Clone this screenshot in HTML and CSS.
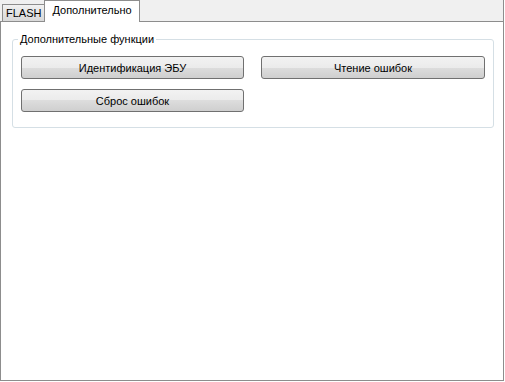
FILE: index.html
```html
<!DOCTYPE html>
<html>
  <head>
    <title>Дополнительно</title>
    <meta charset="utf-8">
    <link rel="stylesheet" href="styles.css">
  </head>
  <body>
    <div class="window">
      <div class="tabbar">
        <div class="tab">FLASH</div>
        <div class="tab active">Дополнительно</div>
        <div class="tabfill"></div>
      </div>
      <div class="pane">
        <fieldset class="group">
          <legend>Дополнительные функции</legend>
          <div class="buttons">
            <button>Идентификация ЭБУ</button>
            <button>Чтение ошибок</button>
            <button>Сброс ошибок</button>
          </div>
        </fieldset>
      </div>
    </div>
  </body>
</html>
```

FILE: styles.css
```css
body {
  margin: 0;
  background: #fff;
  font-family: "Liberation Sans", Arial, sans-serif;
  font-size: 11px;
  color: #000;
}
.window {
  width: 504px;
  height: 381px;
  display: flex;
  flex-direction: column;
  background: #f0f0f0;
}
.tabbar {
  display: flex;
  align-items: flex-end;
  height: 21px;
  padding-left: 2px;
  position: relative;
  z-index: 1;
  border-right: 1px solid #8d8d8d;
}
.tab {
  height: 17px;
  line-height: 17px;
  padding: 0 3px;
  border: 1px solid #8d8d8d;
  border-bottom: none;
  background: linear-gradient(#f2f2f2, #e3e3e3 50%, #d9d9d9);
  box-sizing: border-box;
}
.tab.active {
  line-height: 19px;
  padding: 0 7px;
  margin-left: -1px;
  background: #fff;
  margin-bottom: -1px;
  height: 22px;
}
.tabfill {
  flex: 1;
}
.pane {
  flex: 1;
  background: #fff;
  border: 1px solid #8d8d8d;
  padding: 11px 10px 0 11px;
}
.group {
  margin: 0;
  border: 1px solid #d5dfe5;
  border-radius: 3px;
  padding: 10px 8px 15px 8px;
}
.group legend {
  padding: 0 2px;
  margin-left: -3px;
  line-height: 13px;
}
.buttons {
  display: grid;
  grid-template-columns: 223px 224px;
  column-gap: 17px;
  row-gap: 10px;
}
button {
  height: 23px;
  font-family: inherit;
  font-size: 11px;
  color: #000;
  border: 1px solid #707070;
  border-radius: 3px;
  background: linear-gradient(#f2f2f2, #ebebeb 50%, #dddddd 50%, #cfcfcf);
  padding: 0;
}
```
